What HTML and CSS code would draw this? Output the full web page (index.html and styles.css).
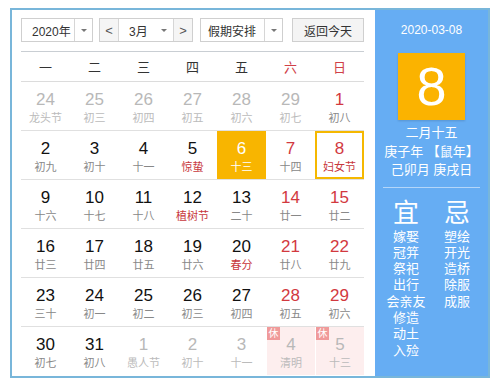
FILE: index.html
```html
<!DOCTYPE html>
<html lang="zh-CN">
<head>
<meta charset="utf-8">
<link rel="stylesheet" href="styles.css">
</head>
<body>
<div class="cal">
  <div class="main">
    <div class="toolbar">
      <div class="sel year"><span class="sel-text">2020年</span><span class="sel-arrow"><i class="tri"></i></span></div>
      <div class="sel month"><span class="nav">&lt;</span><span class="sel-text">3月</span><span class="sel-arrow"><i class="tri"></i></span><span class="nav nav-r">&gt;</span></div>
      <div class="sel holiday"><span class="sel-text">假期安排</span><span class="sel-arrow"><i class="tri"></i></span></div>
      <div class="btn">返回今天</div>
    </div>
    <div class="week">
      <span>一</span><span>二</span><span>三</span><span>四</span><span>五</span><span class="we">六</span><span class="we">日</span>
    </div>
    <div class="grid">
      <div class="row">
        <div class="cell other"><b>24</b><i>龙头节</i></div>
        <div class="cell other"><b>25</b><i>初三</i></div>
        <div class="cell other"><b>26</b><i>初四</i></div>
        <div class="cell other"><b>27</b><i>初五</i></div>
        <div class="cell other"><b>28</b><i>初六</i></div>
        <div class="cell other"><b>29</b><i>初七</i></div>
        <div class="cell wk"><b>1</b><i>初八</i></div>
      </div>
      <div class="row">
        <div class="cell"><b>2</b><i>初九</i></div>
        <div class="cell"><b>3</b><i>初十</i></div>
        <div class="cell"><b>4</b><i>十一</i></div>
        <div class="cell"><b>5</b><i class="fest">惊蛰</i></div>
        <div class="cell today"><b>6</b><i>十三</i></div>
        <div class="cell wk"><b>7</b><i>十四</i></div>
        <div class="cell wk selected"><b>8</b><i class="fest">妇女节</i></div>
      </div>
      <div class="row">
        <div class="cell"><b>9</b><i>十六</i></div>
        <div class="cell"><b>10</b><i>十七</i></div>
        <div class="cell"><b>11</b><i>十八</i></div>
        <div class="cell"><b>12</b><i class="fest">植树节</i></div>
        <div class="cell"><b>13</b><i>二十</i></div>
        <div class="cell wk"><b>14</b><i>廿一</i></div>
        <div class="cell wk"><b>15</b><i>廿二</i></div>
      </div>
      <div class="row">
        <div class="cell"><b>16</b><i>廿三</i></div>
        <div class="cell"><b>17</b><i>廿四</i></div>
        <div class="cell"><b>18</b><i>廿五</i></div>
        <div class="cell"><b>19</b><i>廿六</i></div>
        <div class="cell"><b>20</b><i class="fest">春分</i></div>
        <div class="cell wk"><b>21</b><i>廿八</i></div>
        <div class="cell wk"><b>22</b><i>廿九</i></div>
      </div>
      <div class="row">
        <div class="cell"><b>23</b><i>三十</i></div>
        <div class="cell"><b>24</b><i>初一</i></div>
        <div class="cell"><b>25</b><i>初二</i></div>
        <div class="cell"><b>26</b><i>初三</i></div>
        <div class="cell"><b>27</b><i>初四</i></div>
        <div class="cell wk"><b>28</b><i>初五</i></div>
        <div class="cell wk"><b>29</b><i>初六</i></div>
      </div>
      <div class="row last">
        <div class="cell"><b>30</b><i>初七</i></div>
        <div class="cell"><b>31</b><i>初八</i></div>
        <div class="cell other"><b>1</b><i>愚人节</i></div>
        <div class="cell other"><b>2</b><i>初十</i></div>
        <div class="cell other"><b>3</b><i>十一</i></div>
        <div class="cell other rest"><span class="badge">休</span><b>4</b><i>清明</i></div>
        <div class="cell other rest"><span class="badge">休</span><b>5</b><i>十三</i></div>
      </div>
    </div>
  </div>
  <div class="side">
    <div class="date">2020-03-08</div>
    <div class="big">8</div>
    <div class="lunar">
      <div>二月十五</div>
      <div>庚子年 【鼠年】</div>
      <div>己卯月 庚戌日</div>
    </div>
    <div class="divider"></div>
    <div class="yiji">
      <div class="col">
        <div class="head">宜</div>
        <div>嫁娶</div><div>冠笄</div><div>祭祀</div><div>出行</div><div>会亲友</div><div>修造</div><div>动土</div><div>入殓</div>
      </div>
      <div class="col">
        <div class="head">忌</div>
        <div>塑绘</div><div>开光</div><div>造桥</div><div>除服</div><div>成服</div>
      </div>
    </div>
  </div>
</div>
</body>
</html>
```
FILE: styles.css
```css
* { box-sizing: border-box; }
html, body { margin: 0; padding: 0; background: #fff; }
body {
  font-family: "Liberation Sans", "Noto Sans CJK SC", sans-serif;
  color: #333;
}
.cal {
  margin: 8px 10px 0 10px;
  width: 480px;
  height: 370px;
  border: 2px solid #78b6da;
  display: flex;
}
.main {
  width: 363px;
  padding: 8px 0 0 9px;
}
.toolbar {
  display: flex;
  height: 24px;
  font-size: 12px;
  width: 343px;
}
.sel, .btn {
  display: flex;
  height: 24px;
  border: 1px solid #cfcfcf;
  background: #fff;
  align-items: stretch;
}
.sel-text { display: flex; align-items: center; }
.sel-arrow {
  display: flex;
  align-items: center;
  justify-content: center;
  border-left: 1px solid #d6d6d6;
}
.tri {
  display: block;
  width: 0; height: 0;
  border-left: 3px solid transparent;
  border-right: 3px solid transparent;
  border-top: 3px solid #777;
}
.year { width: 73px; }
.year .sel-text { width: 52px; padding-left: 10px; }
.year .sel-arrow { flex: 1; }
.month { width: 94px; margin-left: 6px; }
.nav {
  width: 19px;
  display: flex;
  align-items: center;
  justify-content: center;
  background: #f5f5f5;
  border-right: 1px solid #d6d6d6;
  color: #555;
  font-size: 13px;
}
.nav-r { border-right: 0; border-left: 1px solid #d6d6d6; }
.month .sel-text { width: 35px; padding-left: 10px; }
.month .sel-arrow { border-left: 0; width: 19px; }
.holiday { width: 84px; margin-left: 7px; }
.holiday .sel-text { width: 63px; padding-left: 7px; }
.holiday .sel-arrow { flex: 1; }
.btn {
  width: 73px;
  margin-left: 9px;
  background: #f4f4f4;
  justify-content: center;
  align-items: center;
}
.week {
  margin-top: 9px;
  width: 343px;
  border-top: 1px solid #c9ced3;
  border-bottom: 1px solid #dcdcdc;
  height: 31px;
  display: grid;
  grid-template-columns: repeat(7, 49px);
  align-items: center;
  font-size: 13px;
  color: #333;
}
.week span { text-align: center; }
.week .we { color: #d04048; }
.grid { width: 343px; }
.row {
  display: grid;
  grid-template-columns: repeat(7, 49px);
  height: 49px;
  border-bottom: 1px solid #e0e0e0;
}
.row.last { border-bottom: 0; height: 48px; }
.cell {
  position: relative;
  display: flex;
  flex-direction: column;
  align-items: center;
  padding-top: 8px;
}
.cell b {
  display: block;
  font-weight: normal;
  font-size: 17px;
  line-height: 20px;
  color: #111;
}
.cell i {
  display: block;
  font-style: normal;
  font-size: 11px;
  line-height: 14px;
  color: #888;
  margin-top: 1px;
}
.cell.wk b { color: #d2393f; }
.cell .fest { color: #c8373c; }
.cell.other b { color: #b8b8b8; }
.cell.other i { color: #bbb; }
.cell.today { background: #f8b500; }
.cell.today b, .cell.today i { color: #fff; }
.cell.selected { border: 2px solid #f5b800; padding-top: 6px; }
.cell.rest { background: #fdeeee; border-left: 1px solid #fff; }
.badge {
  position: absolute;
  left: 0; top: 0;
  width: 13px; height: 13px;
  background: #f09a9a;
  color: #fff;
  font-size: 10px;
  line-height: 13px;
  text-align: center;
}
.side {
  flex: 1;
  background: #66adf3;
  color: #fff;
  display: flex;
  flex-direction: column;
  align-items: center;
  padding-top: 13px;
}
.date { font-size: 12px; line-height: 15px; }
.big {
  margin-top: 15px;
  width: 67px;
  height: 67px;
  background: #fbb300;
  box-shadow: 0 1px 2px rgba(0,0,0,0.15);
  font-size: 54px;
  line-height: 67px;
  text-align: center;
}
.lunar {
  margin-top: 4px;
  font-size: 13px;
  line-height: 18.5px;
  text-align: center;
}
.divider {
  margin-top: 7px;
  width: 97px;
  height: 1px;
  background: rgba(255,255,255,0.5);
}
.yiji {
  display: flex;
  gap: 5px;
  margin-top: 10px;
  font-size: 13px;
  line-height: 16.3px;
}
.col { width: 46px; text-align: center; }
.col .head { font-size: 26px; line-height: 30px; margin-bottom: 1px; }
```
